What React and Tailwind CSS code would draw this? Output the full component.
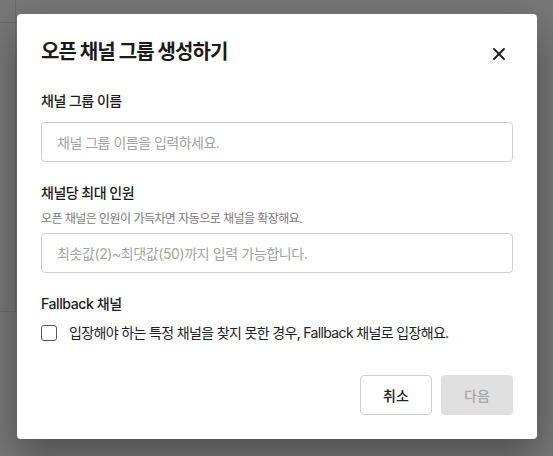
import React from "react";

export default function App() {
  return (
    <div
      className="relative w-[553px] h-[456px] overflow-hidden bg-[#777777]"
      style={{ fontFamily: '"Inter", "Noto Sans CJK KR", sans-serif' }}
    >
      {/* faint background page (dimmed) */}
      <div className="absolute left-0 top-0 w-[16px] h-[312px] border-r border-b border-[#6a6a6a]">
        <div className="h-[23px] border-b border-[#6a6a6a]" />
      </div>

      <div className="absolute left-[17px] top-[14px] w-[520px] rounded-[4px] bg-white px-[24px] pt-[22px] pb-[24px] shadow-[0_16px_40px_rgba(0,0,0,0.35)]">
        <div className="flex items-center justify-between h-[32px]">
          <h1 className="text-[20px] font-bold text-[#1a1a1a] tracking-[-0.9px]">오픈 채널 그룹 생성하기</h1>
          <svg width="12" height="12" viewBox="0 0 12 12" className="mr-[8px] mt-[4px]">
            <path d="M1 1 L11 11 M11 1 L1 11" stroke="#1a1a1a" strokeWidth="1.8" strokeLinecap="round" />
          </svg>
        </div>

        <div className="mt-[23px]">
          <div className="text-[14px] font-medium text-[#1a1a1a] leading-[20px] tracking-[-0.5px]">채널 그룹 이름</div>
          <div className="mt-[11px] h-[40px] rounded-[4px] border border-[#cfcfcf] flex items-center px-[15px] text-[14px] text-[#a3a3a3] tracking-[-0.5px]">
            채널 그룹 이름을 입력하세요.
          </div>
        </div>

        <div className="mt-[21px]">
          <div className="text-[14px] font-medium text-[#1a1a1a] leading-[20px] tracking-[-0.5px]">채널당 최대 인원</div>
          <div className="mt-[8px] text-[12px] text-[#7a7a7a] leading-[16px] tracking-[-0.55px]">오픈 채널은 인원이 가득차면 자동으로 채널을 확장해요.</div>
          <div className="mt-[6px] h-[40px] rounded-[4px] border border-[#cfcfcf] flex items-center px-[15px] text-[14px] text-[#a3a3a3] tracking-[-0.4px]">
            최솟값(2)~최댓값(50)까지 입력 가능합니다.
          </div>
        </div>

        <div className="mt-[21px]">
          <div className="text-[14px] font-medium text-[#1a1a1a] leading-[20px] tracking-[-0.4px]">Fallback 채널</div>
          <div className="mt-[9px] flex items-center gap-[12px]">
            <div className="w-[16px] h-[16px] rounded-[3px] border-[1.5px] border-[#555555]" />
            <span className="text-[14px] text-[#222222] leading-[20px] tracking-[-0.65px]">입장해야 하는 특정 채널을 찾지 못한 경우, Fallback 채널로 입장해요.</span>
          </div>
        </div>

        <div className="mt-[32px] flex justify-end gap-[9px]">
          <button className="w-[72px] h-[40px] rounded-[4px] border border-[#cfcfcf] bg-white text-[14px] font-medium text-[#222222]">취소</button>
          <button className="w-[72px] h-[40px] rounded-[4px] bg-[#e0e0e0] text-[14px] font-medium text-[#a8a8a8]">다음</button>
        </div>
      </div>
    </div>
  );
}
